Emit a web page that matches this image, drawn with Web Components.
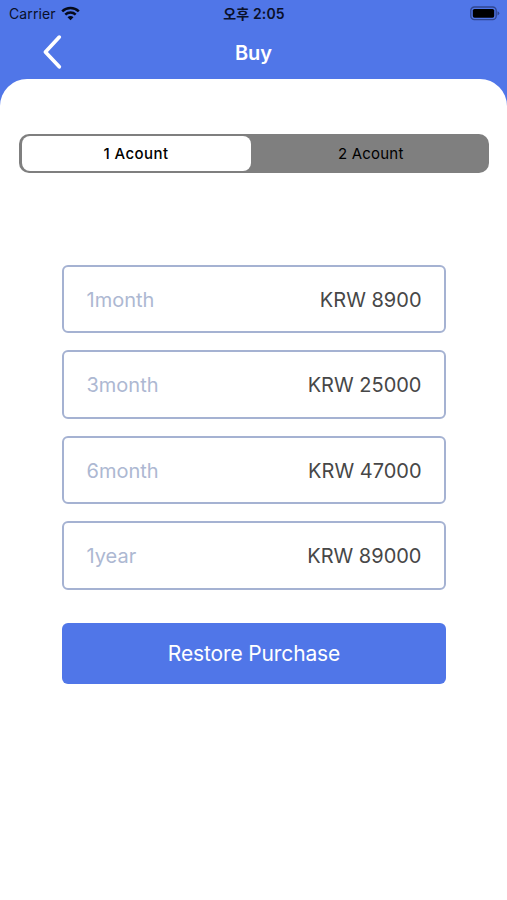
<!DOCTYPE html>
<html lang="ko">
<head>
<meta charset="utf-8">
<title>Buy</title>
<style>
html, body { margin: 0; height: 100%; background: #fff; }
body { font-family: Inter, "Noto Sans CJK KR", sans-serif; overflow: hidden; }
</style>
</head>
<body>
<purchase-screen></purchase-screen>
<script>
const define = (name, html) => customElements.define(name, class extends HTMLElement {
  constructor() {
    super();
    const t = document.createElement('template');
    t.innerHTML = html;
    this.attachShadow({ mode: 'open' }).append(t.content.cloneNode(true));
  }
});

define('status-bar', `
<style>
:host { display: grid; grid-template-columns: 1fr auto 1fr; align-items: center; height: 27px; padding: 0 7px 0 9px; box-sizing: border-box; color: #0a1029; font-size: 14px; line-height: 27px; }
.left { display: flex; align-items: center; gap: 5px; letter-spacing: .12px; }
.time { font-weight: 600; font-size: 14px; letter-spacing: .15px; margin-right: 1px; }
.battery { justify-self: end; }
svg { display: block; }
.left svg { margin-top: -1px; }
</style>
<div class="left"><span>Carrier</span>
<svg width="19" height="15" viewBox="0 0 19 15" fill="none" stroke="#060a1a" stroke-width="2.5"><path d="M1.2 5.4C5.8.9 13.2.9 17.8 5.4"/><path d="M4.3 8.7C7.2 5.9 11.8 5.9 14.7 8.7"/><path d="M9.5 14.3 6.5 11.3C8.2 9.7 10.8 9.7 12.5 11.3Z" fill="#060a1a" stroke="none"/></svg></div>
<span class="time">오후 2:05</span>
<svg class="battery" width="30" height="15" viewBox="0 0 30 15"><rect x=".8" y="1" width="25.4" height="12.6" rx="3.6" fill="none" stroke="#304690" stroke-width="1.3"/><rect x="2.8" y="2.9" width="21.4" height="8.8" rx="1.7" fill="#000"/><path d="M27.5 5.2Q29.3 5.7 29.3 7.3T27.5 9.4Z" fill="#304690"/></svg>`);

define('nav-bar', `
<style>
:host { display: grid; grid-template-columns: 1fr auto 1fr; align-items: center; height: 52px; color: #fff; }
svg { display: block; margin: -2px 0 0 42px; }
h1 { margin: 0; font-size: 20px; font-weight: 600; line-height: 52px; }
</style>
<svg width="21" height="36" viewBox="0 0 21 36" fill="none" stroke="#fff" stroke-width="3.7" stroke-linecap="round" stroke-linejoin="round"><path d="M17.3 3.1 3.4 18 17.3 32.8"/></svg>
<h1><slot></slot></h1>`);

define('segment-control', `
<style>
:host { display: flex; height: 39px; margin: 0 18px 0 19px; padding: 2px 2px 2px 2.5px; box-sizing: border-box; background: #7f7f7f; border-radius: 10px; color: #000; font-size: 15px; line-height: 36px; letter-spacing: .2px; }
::slotted(*) { flex: 1; text-align: center; padding-left: 4px; }
::slotted([selected]) { flex: 0 0 229px; height: 35px; padding-left: 0; background: #fff; border-radius: 8px; font-weight: 500; letter-spacing: .4px; }
</style>
<slot></slot>`);

define('price-option', `
<style>
:host { display: flex; justify-content: space-between; align-items: center; height: 68.5px; box-sizing: border-box; padding: 1.5px 22.5px 0; border: 2px solid #a5b2d2; border-radius: 6px; font-size: 20px; color: #474747; }
.term { color: #adb8d2; }
</style>
<span class="term"><slot name="term"></slot></span><span><slot></slot></span>`);

define('restore-button', `
<style>
:host { display: block; }
button { display: block; width: 100%; height: 61px; padding: 0; border: 0; border-radius: 6px; background: #5076e8; color: #fff; font: inherit; font-size: 21px; letter-spacing: -.13px; }
</style>
<button><slot></slot></button>`);

define('purchase-screen', `
<style>
:host { display: flex; flex-direction: column; height: 900px; background: linear-gradient(#5076e8 200px, #fff 200px); }
main { flex: 1; background: #fff; border-radius: 27px 27px 0 0; padding-top: 55px; box-sizing: border-box; }
.options { display: grid; gap: 17px; margin: 91.5px 61px 0 62px; }
restore-button { margin: 33px 61px 0 62px; }
</style>
<status-bar></status-bar>
<nav-bar>Buy</nav-bar>
<main>
<segment-control><span selected>1 Acount</span><span>2 Acount</span></segment-control>
<div class="options">
<price-option><span slot="term">1month</span>KRW 8900</price-option>
<price-option><span slot="term">3month</span>KRW 25000</price-option>
<price-option><span slot="term">6month</span>KRW 47000</price-option>
<price-option><span slot="term">1year</span>KRW 89000</price-option>
</div>
<restore-button>Restore Purchase</restore-button>
</main>`);
</script>
</body>
</html>
